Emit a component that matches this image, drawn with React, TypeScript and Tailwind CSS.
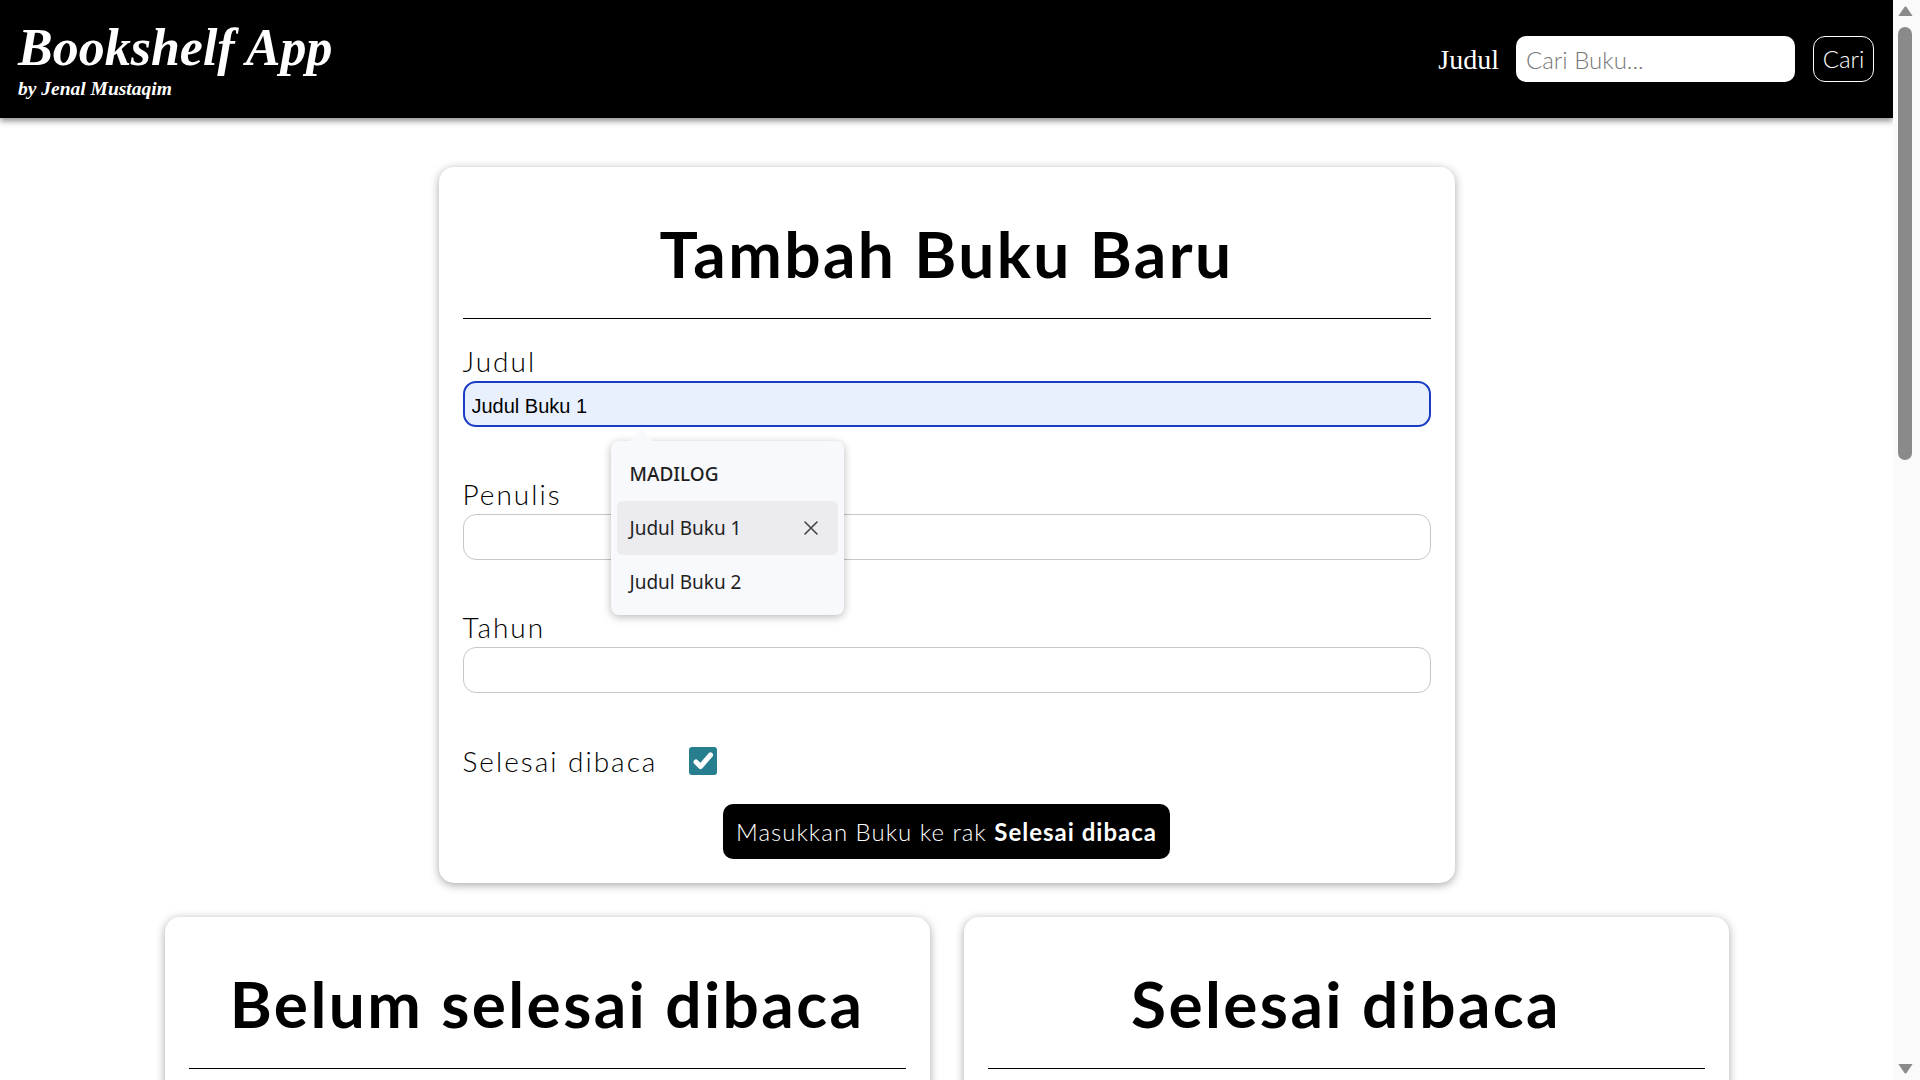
import React from "react";

function Field({ label }: { label: string }) {
  return (
    <>
      <label className="mt-[50px] block text-[28px] font-light leading-[34px] tracking-[2px]">{label}</label>
      <input className="mt-[3px] block h-[46px] w-full rounded-[13px] border border-[#c6c6c6] bg-white px-[8px] text-[20px] outline-none" />
    </>
  );
}

function AutofillPopup() {
  return (
    <div className="absolute left-[148px] top-[60px] z-20 w-[233px] rounded-[8px] bg-[#f8f9fc] p-[6px] font-['Noto_Sans',sans-serif] text-[19px] text-[#1f1f1f] shadow-[0_2px_8px_rgba(0,0,0,0.28)]">
      <span className="absolute -top-[8px] left-[22px] h-[17px] w-[17px] rotate-45 bg-[#f8f9fc]" />
      <div className="relative flex h-[54px] items-center px-[13px] font-medium">MADILOG</div>
      <div className="relative flex h-[54px] items-center justify-between rounded-[6px] bg-[#ececf0] pl-[13px] pr-[20px]">
        <span>Judul Buku 1</span>
        <svg width="14" height="14" viewBox="0 0 14 14" fill="none" stroke="#444" strokeWidth="1.6" strokeLinecap="round">
          <path d="M1 1l12 12M13 1L1 13" />
        </svg>
      </div>
      <div className="relative flex h-[54px] items-center px-[13px]">Judul Buku 2</div>
    </div>
  );
}

function Shelf({ title }: { title: string }) {
  return (
    <section className="min-h-[1620px] w-[765px] rounded-[15px] bg-white p-6 shadow-[0_2px_10px_rgba(0,0,0,0.35)]">
      <h2 className="mt-6 text-center text-[64px] font-bold leading-[77px] tracking-[2.4px]">{title}</h2>
      <div className="mt-[26px] h-px bg-black" />
    </section>
  );
}

// browser scrollbar as it shows in the capture (headless hides the real one)
function ScrollStrip() {
  return (
    <div className="flex h-screen w-[27px] shrink-0 flex-col bg-[#fafafa] pl-[5px]">
      <svg className="mt-[6px]" width="15" height="11" viewBox="0 0 15 11">
        <path d="M6.3 1.2a1.4 1.4 0 0 1 2.4 0L14.6 10H0.4z" fill="#8a8a8a" />
      </svg>
      <div className="mt-[10px] h-[433px] w-[14px] rounded-full bg-[#8a8a8a]" />
      <svg className="mb-[6px] mt-auto" width="15" height="11" viewBox="0 0 15 11">
        <path d="M6.3 9.8a1.4 1.4 0 0 0 2.4 0L14.6 1H0.4z" fill="#8a8a8a" />
      </svg>
    </div>
  );
}

export default function App() {
  return (
    <div className="flex h-screen overflow-hidden bg-white font-[Lato,sans-serif] text-black">
      <div className="h-screen min-w-0 flex-1 overflow-y-auto">
        <header className="relative z-10 flex h-[118px] items-center justify-between bg-black pl-[18px] pr-[19px] shadow-[0_3px_6px_rgba(0,0,0,0.45)]">
          <div className="font-['Liberation_Serif',serif] font-bold italic text-white">
            <h1 className="text-[52px] leading-[58px]">Bookshelf App</h1>
            <p className="mt-px text-[19.5px] leading-[22px]">by Jenal Mustaqim</p>
          </div>
          <form className="flex items-center" onSubmit={(e) => e.preventDefault()}>
            <label className="font-['Liberation_Serif',serif] text-[28px] leading-[31px] text-white">Judul</label>
            <input
              placeholder="Cari Buku..."
              className="ml-[17px] h-[46px] w-[279px] rounded-[10px] bg-white px-[10px] text-[24px] font-light outline-none placeholder:text-[#777]"
            />
            <button className="ml-[18px] h-[46px] w-[61px] rounded-[12px] border border-white text-[24px] font-light text-white">
              Cari
            </button>
          </form>
        </header>

        <main className="pb-[47px]">
          <section className="mx-auto mt-[49px] w-[1016px] rounded-[15px] bg-white p-6 shadow-[0_2px_10px_rgba(0,0,0,0.35)]">
            <h2 className="mt-6 text-center text-[64px] font-bold leading-[77px] tracking-[2.4px]">Tambah Buku Baru</h2>
            <div className="mt-[26px] h-px bg-black" />
            <form onSubmit={(e) => e.preventDefault()}>
              <label className="mt-[25px] block text-[28px] font-light leading-[34px] tracking-[2px]">Judul</label>
              <div className="relative mt-[3px]">
                <input
                  defaultValue="Judul Buku 1"
                  className="h-[46px] w-full rounded-[13px] border-2 border-[#1a3cc4] bg-[#e8f0fe] px-[7px] pt-[5px] font-['Liberation_Sans',Arial,sans-serif] text-[20px] text-black outline-none"
                />
                <AutofillPopup />
              </div>
              <Field label="Penulis" />
              <Field label="Tahun" />
              <div className="mt-[51px] flex h-[34px] items-center gap-8">
                <span className="text-[28px] font-light leading-[34px] tracking-[2px]">Selesai dibaca</span>
                <span className="flex h-[28px] w-[28px] items-center justify-center rounded-[3px] bg-[#267e8e]">
                  <svg width="28" height="28" viewBox="0 0 28 28" fill="none" stroke="white" strokeWidth="5" strokeLinecap="round" strokeLinejoin="round">
                    <path d="M7 15l4.5 4.5L21.5 8" />
                  </svg>
                </span>
              </div>
              <button className="mx-auto mt-[26px] flex h-[55px] items-center rounded-[10px] bg-black px-[13px] text-[24px] font-light tracking-[1px] text-white">
                Masukkan Buku ke rak&nbsp;<b className="font-bold">Selesai dibaca</b>
              </button>
            </form>
          </section>

          <div className="mt-[34px] flex justify-center gap-[34px]">
            <Shelf title="Belum selesai dibaca" />
            <Shelf title="Selesai dibaca" />
          </div>
        </main>
      </div>
      <ScrollStrip />
    </div>
  );
}
